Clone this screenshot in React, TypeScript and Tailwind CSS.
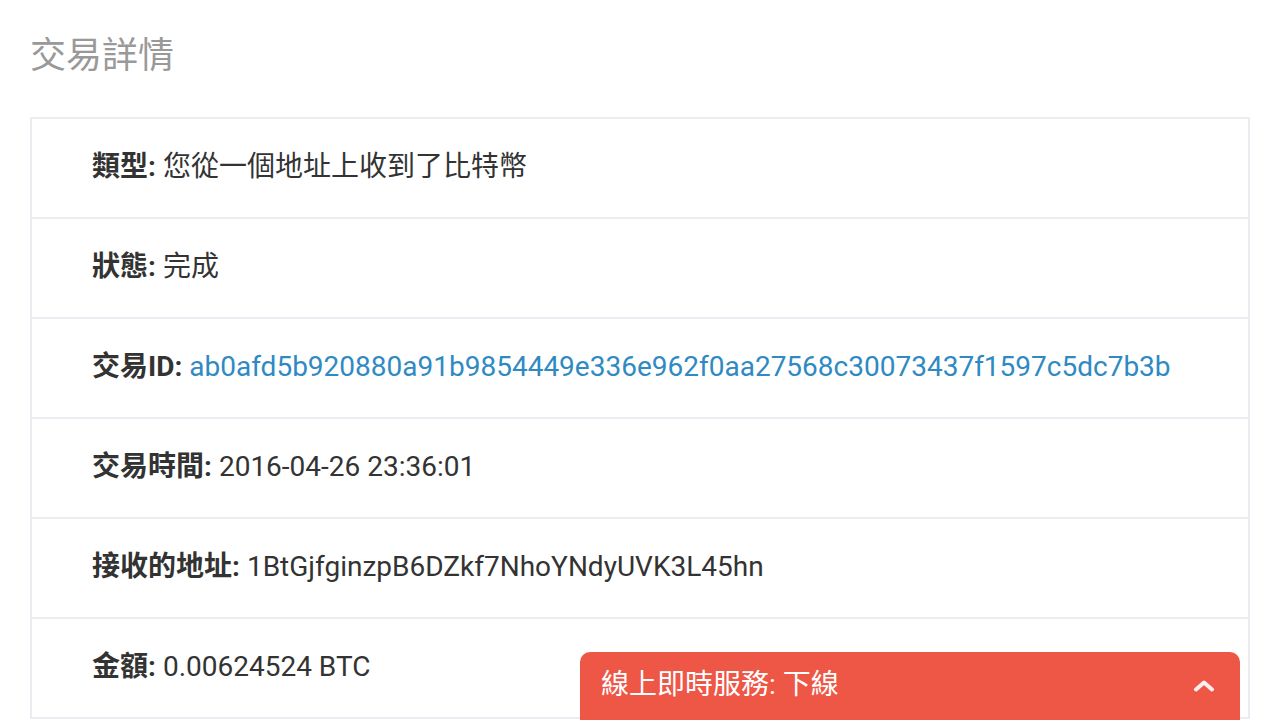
import React from "react";

const rows: { label: string; value: string; link?: boolean }[] = [
  { label: "類型", value: "您從一個地址上收到了比特幣" },
  { label: "狀態", value: "完成" },
  { label: "交易ID", value: "ab0afd5b920880a91b9854449e336e962f0aa27568c30073437f1597c5dc7b3b", link: true },
  { label: "交易時間", value: "2016-04-26 23:36:01" },
  { label: "接收的地址", value: "1BtGjfginzpB6DZkf7NhoYNdyUVK3L45hn" },
  { label: "金額", value: "0.00624524 BTC" },
];

export default function App() {
  return (
    <div
      className="min-h-screen bg-white text-[#333]"
      style={{ fontFamily: 'Roboto, "Noto Sans CJK TC", sans-serif' }}
    >
      <div className="px-[30px] pt-[31px]">
        <h1 className="text-[36px] leading-[50px] text-[#999] font-normal">交易詳情</h1>
        <div className="mt-[36px] border-2 border-[#e9edf1]">
          {rows.map((r, i) => (
            <div
              key={r.label}
              className={`flex items-center pl-[60px] pb-[3px] text-[28px] ${
                i < rows.length - 1 ? "border-b-2 border-[#e9edf1] h-[100px]" : "h-[98px]"
              }`}
            >
              <span className="font-bold">{r.label}:</span>
              <span className="ml-[7px]">
                {r.link ? <a className="text-[#2f8ac3]">{r.value}</a> : r.value}
              </span>
            </div>
          ))}
        </div>
      </div>
      <div className="fixed left-[580px] top-[652px] w-[660px] h-[100px] bg-[#ee5646] rounded-t-[10px] text-white flex items-start">
        <div className="flex w-full items-center justify-between pl-[21px] pr-[24px] h-[66px]">
          <span className="text-[28px]">線上即時服務: 下線</span>
          <svg width="24" height="14" viewBox="0 0 24 14" fill="none">
            <path d="M4 11.5 L12 4.5 L20 11.5" stroke="white" strokeOpacity="0.9" strokeWidth="4" strokeLinecap="round" strokeLinejoin="round" />
          </svg>
        </div>
      </div>
    </div>
  );
}
